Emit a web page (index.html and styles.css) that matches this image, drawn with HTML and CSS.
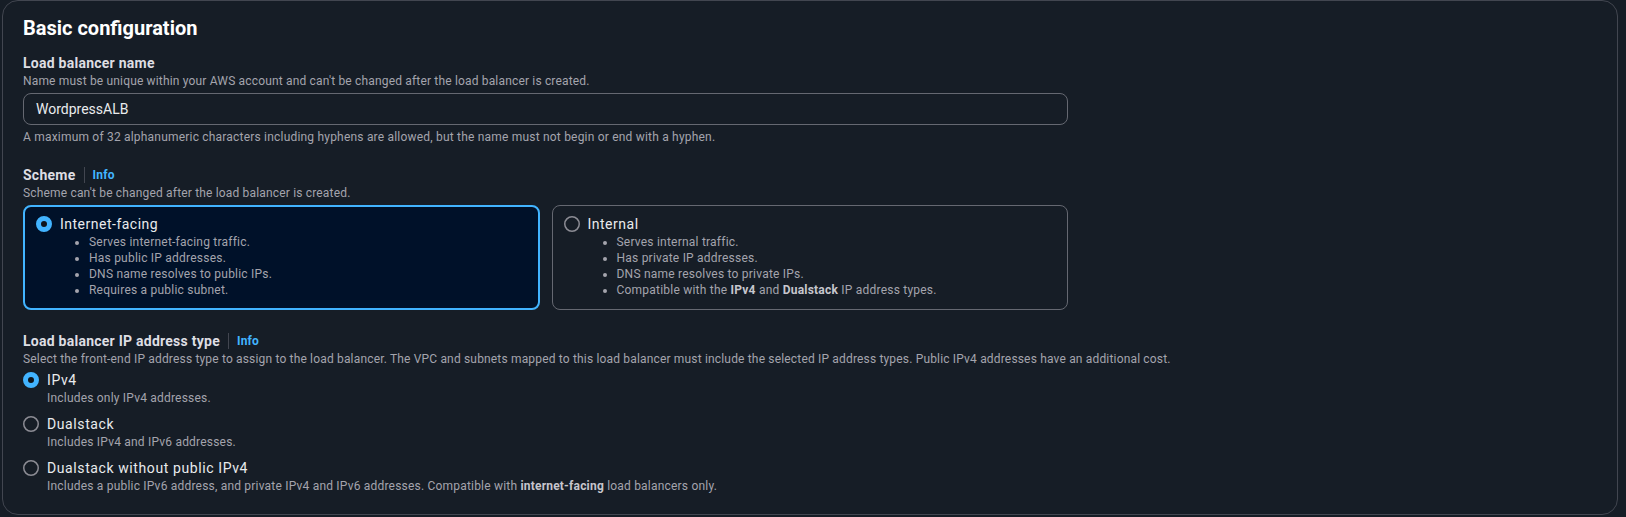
FILE: index.html
```html
<!DOCTYPE html>
<html lang="en">
<head>
<meta charset="utf-8">
<title>Basic configuration</title>
<link rel="stylesheet" href="styles.css">
</head>
<body>
<section class="container">
  <h2 class="heading">Basic configuration</h2>

  <div class="field field-first">
    <div class="label">Load balancer name</div>
    <div class="desc">Name must be unique within your AWS account and can't be changed after the load balancer is created.</div>
    <div class="input">WordpressALB</div>
    <div class="constraint">A maximum of 32 alphanumeric characters including hyphens are allowed, but the name must not begin or end with a hyphen.</div>
  </div>

  <div class="field field-scheme">
    <div class="label-row"><span class="label">Scheme</span><span class="divider"></span><a class="info">Info</a></div>
    <div class="desc">Scheme can't be changed after the load balancer is created.</div>
    <div class="tiles">
      <div class="tile tile-selected">
        <div class="tile-head">
          <svg class="radio" viewBox="0 0 16 16" width="16" height="16"><circle cx="8" cy="8" r="5.5" fill="#0f141a" stroke="#42b4ff" stroke-width="5"/></svg>
          <span class="tile-label">Internet-facing</span>
        </div>
        <ul class="tile-list">
          <li>Serves internet-facing traffic.</li>
          <li>Has public IP addresses.</li>
          <li>DNS name resolves to public IPs.</li>
          <li>Requires a public subnet.</li>
        </ul>
      </div>
      <div class="tile">
        <div class="tile-head">
          <svg class="radio" viewBox="0 0 16 16" width="16" height="16"><circle cx="8" cy="8" r="7.25" fill="none" stroke="#8c8c94" stroke-width="1.5"/></svg>
          <span class="tile-label">Internal</span>
        </div>
        <ul class="tile-list">
          <li>Serves internal traffic.</li>
          <li>Has private IP addresses.</li>
          <li>DNS name resolves to private IPs.</li>
          <li>Compatible with the <b>IPv4</b> and <b>Dualstack</b> IP address types.</li>
        </ul>
      </div>
    </div>
  </div>

  <div class="field field-ip">
    <div class="label-row"><span class="label">Load balancer IP address type</span><span class="divider"></span><a class="info">Info</a></div>
    <div class="desc">Select the front-end IP address type to assign to the load balancer. The VPC and subnets mapped to this load balancer must include the selected IP address types. Public IPv4 addresses have an additional cost.</div>
    <div class="radio-group">
      <div class="radio-item">
        <div class="radio-head">
          <svg class="radio" viewBox="0 0 16 16" width="16" height="16"><circle cx="8" cy="8" r="5.5" fill="#0f141a" stroke="#42b4ff" stroke-width="5"/></svg>
          <span class="radio-label">IPv4</span>
        </div>
        <div class="radio-desc">Includes only IPv4 addresses.</div>
      </div>
      <div class="radio-item">
        <div class="radio-head">
          <svg class="radio" viewBox="0 0 16 16" width="16" height="16"><circle cx="8" cy="8" r="7.25" fill="none" stroke="#8c8c94" stroke-width="1.5"/></svg>
          <span class="radio-label">Dualstack</span>
        </div>
        <div class="radio-desc">Includes IPv4 and IPv6 addresses.</div>
      </div>
      <div class="radio-item">
        <div class="radio-head">
          <svg class="radio" viewBox="0 0 16 16" width="16" height="16"><circle cx="8" cy="8" r="7.25" fill="none" stroke="#8c8c94" stroke-width="1.5"/></svg>
          <span class="radio-label">Dualstack without public IPv4</span>
        </div>
        <div class="radio-desc">Includes a public IPv6 address, and private IPv4 and IPv6 addresses. Compatible with <b>internet-facing</b> load balancers only.</div>
      </div>
    </div>
  </div>
</section>
</body>
</html>
```

FILE: styles.css
```css
html, body {
  margin: 0;
  padding: 0;
  background: #161d26;
}
body {
  padding: 0 8px 0 2px;
  font-family: Roboto, "Liberation Sans", Arial, sans-serif;
  color: #c6c6cd;
}
.container {
  border: 1px solid #424650;
  border-radius: 16px;
  padding: 15px 20px 20px 20px;
  background: #161d26;
}
.heading {
  margin: 0;
  font-size: 20px;
  line-height: 24px;
  font-weight: 700;
  color: #ffffff;
}
.field {
  width: 1045px;
}
.field-first {
  margin-top: 13px;
}
.field-scheme {
  margin-top: 20px;
}
.field-ip {
  margin-top: 21px;
}
.label {
  font-size: 14px;
  line-height: 20px;
  font-weight: 700;
  letter-spacing: 0.25px;
  color: #dedee3;
}
.label-row {
  display: flex;
  align-items: center;
  height: 20px;
}
.divider {
  width: 1px;
  height: 16px;
  background: #424650;
  margin: 0 8px;
}
.info {
  font-size: 12px;
  line-height: 16px;
  font-weight: 700;
  letter-spacing: 0.2px;
  color: #42b4ff;
}
.desc {
  font-size: 12px;
  line-height: 16px;
  letter-spacing: 0.17px;
  color: #a4a4ad;
  white-space: nowrap;
}
.input {
  margin-top: 4px;
  height: 32px;
  box-sizing: border-box;
  border: 1px solid #656871;
  border-radius: 8px;
  padding: 5px 12px;
  font-size: 14px;
  line-height: 20px;
  color: #e9ebed;
}
.constraint {
  margin-top: 4px;
  font-size: 12px;
  line-height: 16px;
  letter-spacing: 0.2px;
  color: #a4a4ad;
}
.tiles {
  margin-top: 4px;
  display: grid;
  grid-template-columns: 1fr 1fr;
  gap: 12px;
}
.tile {
  border: 1px solid #656871;
  border-radius: 8px;
  padding: 8px 11px 11px 11px;
}
.tile-selected {
  border: 2px solid #42b4ff;
  background: #001129;
  padding: 7px 11px 10px 11px;
}
.tile-head, .radio-head {
  display: flex;
  align-items: center;
  gap: 8px;
  height: 20px;
}
.radio {
  flex: none;
  display: block;
}
.tile-label, .radio-label {
  font-size: 14px;
  line-height: 20px;
  letter-spacing: 0.5px;
  color: #e9ebed;
}
.radio-label {
  letter-spacing: 0.6px;
}
.tile-list {
  margin: 0;
  padding: 0 0 0 53px;
  font-size: 12px;
  line-height: 16px;
  letter-spacing: 0.22px;
  color: #a4a4ad;
}
.tile-list b, .radio-desc b {
  color: #c6c6cd;
}
.radio-group {
  margin-top: 3px;
  display: flex;
  flex-direction: column;
  gap: 8px;
}
.radio-desc {
  padding-left: 24px;
  font-size: 12px;
  line-height: 16px;
  letter-spacing: 0.2px;
  color: #a4a4ad;
}
```
